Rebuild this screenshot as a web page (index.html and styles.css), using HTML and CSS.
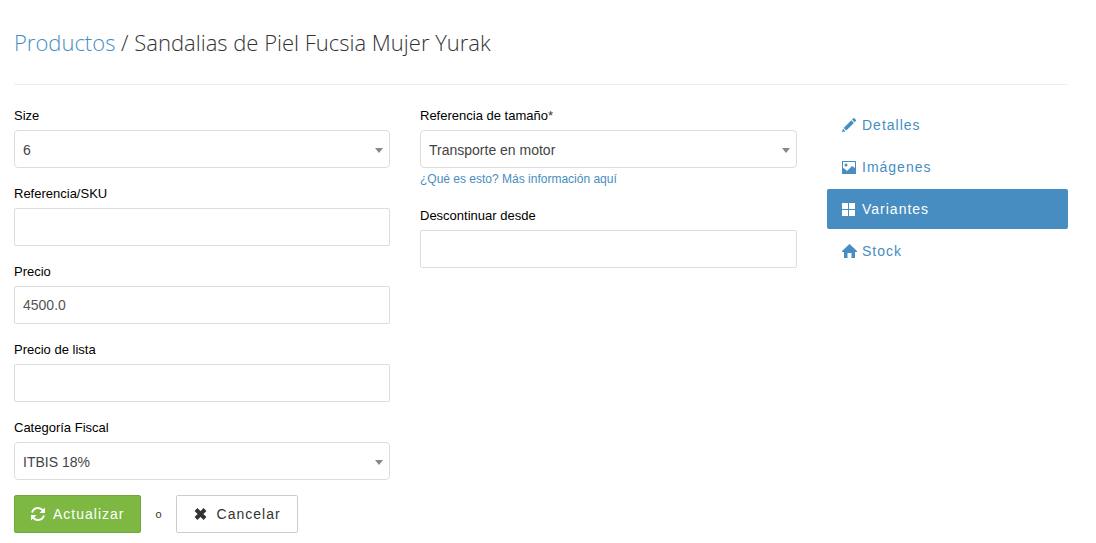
FILE: index.html
```
<!DOCTYPE html>
<html lang="es">
<head>
    <meta charset="UTF-8">
    <meta name="viewport" content="width=device-width, initial-scale=1.0">
    <title>Productos / Sandalias de Piel Fucsia Mujer Yurak</title>
    <link rel="stylesheet" href="styles.css">
</head>
<body>
    <header class="page-header">
        <h1><a href="#productos">Productos</a> / Sandalias de Piel Fucsia Mujer Yurak</h1>
    </header>

    <main class="content">
        <form id="variant-form" class="variant-form">
            <div class="column">
                <div class="field">
                    <label for="size">Size</label>
                    <div class="select">
                        <select id="size">
                            <option>6</option>
                        </select>
                    </div>
                </div>
                <div class="field">
                    <label for="sku">Referencia/SKU</label>
                    <input type="text" id="sku">
                </div>
                <div class="field">
                    <label for="price">Precio</label>
                    <input type="text" id="price" value="4500.0">
                </div>
                <div class="field">
                    <label for="list-price">Precio de lista</label>
                    <input type="text" id="list-price">
                </div>
                <div class="field">
                    <label for="tax">Categoría Fiscal</label>
                    <div class="select">
                        <select id="tax">
                            <option>ITBIS 18%</option>
                        </select>
                    </div>
                </div>
                <div class="actions">
                    <button type="submit" class="btn btn-success">
                        <svg class="icon" viewBox="0 0 16 16" fill="none" stroke="currentColor" stroke-width="2">
                            <path d="M1 6.500C2 3.500 4.500 2 7 2c2 0 3.500.8 4.800 2.200"/>
                            <path d="M13 9.500C12 12.500 9.500 14 7 14c-2 0-3.500-.8-4.800-2.200"/>
                            <path fill="currentColor" stroke="none" d="M14 1.500V7H8.500zM0 14.500V9h5.500z"/>
                        </svg>
                        Actualizar
                    </button>
                    <span class="or">o</span>
                    <button type="button" class="btn btn-default">
                        <svg class="icon" viewBox="0 0 16 16">
                            <path fill="none" stroke="currentColor" stroke-width="4" d="M3 3.500l9 9M12 3.500l-9 9"/>
                        </svg>
                        Cancelar
                    </button>
                </div>
            </div>

            <div class="column">
                <div class="field">
                    <label for="shipping">Referencia de tamaño<span class="required">*</span></label>
                    <div class="select">
                        <select id="shipping">
                            <option>Transporte en motor</option>
                        </select>
                    </div>
                    <a href="#ayuda" class="help">¿Qué es esto? Más información aquí</a>
                </div>
                <div class="field">
                    <label for="discontinue">Descontinuar desde</label>
                    <input type="text" id="discontinue">
                </div>
            </div>
        </form>

        <nav class="sidebar">
            <a href="#detalles">
                <svg class="icon" viewBox="0 0 16 16" fill="currentColor">
                    <path d="M12.200 1.400c.4-.4.9-.4 1.300 0l1.300 1.300c.4.4.4.9 0 1.300l-1.200 1.200-2.600-2.600zM10.300 3.300l2.600 2.600-7.600 7.600-2.600-2.600zM2 11.700L4.500 14.200 1 15.200z"/>
                </svg>
                Detalles
            </a>
            <a href="#imagenes">
                <svg class="icon" viewBox="0 0 16 16" fill="currentColor">
                    <path fill-rule="evenodd" d="M1 2h14v13H1zM2 3v6l2 1 2 2 5-5 3 2V3z"/>
                    <circle cx="5" cy="6" r="1.500"/>
                </svg>
                Imágenes
            </a>
            <a href="#variantes" class="active">
                <svg class="icon" viewBox="0 0 16 16" fill="currentColor">
                    <path d="M1 2h6v6H1zM8 2h6v6H8zM1 9h6v6H1zM8 9h6v6H8z"/>
                </svg>
                Variantes
            </a>
            <a href="#stock">
                <svg class="icon" viewBox="0 0 16 16" fill="currentColor">
                    <path d="M8.500 1L16 8v1h-2v6h-3.500v-5h-4v5H3V9H1V8z"/>
                </svg>
                Stock
            </a>
        </nav>
    </main>
</body>
</html>
```

FILE: styles.css
```
* {
    box-sizing: border-box;
}
body {
    margin: 0;
    padding: 0 28px 10px 14px;
    font-family: "Liberation Sans", Arial, sans-serif;
    font-size: 14px;
    line-height: 20px;
    color: #333;
    background-color: #fff;
}
a {
    color: #478dc1;
    text-decoration: none;
}
.page-header {
    padding: 26px 0;
    margin-bottom: 20px;
    border-bottom: 1px solid #eee;
}
h1 {
    margin: 0;
    font-family: "Open Sans", sans-serif;
    font-size: 22px;
    font-weight: 300;
    line-height: 32px;
}
.content {
    display: grid;
    grid-template-columns: 783fr 241fr;
    column-gap: 30px;
    align-items: start;
}
.variant-form {
    display: grid;
    grid-template-columns: 376fr 377fr;
    column-gap: 30px;
}
.field {
    margin-bottom: 15px;
}
label {
    display: block;
    margin-bottom: 3px;
    font-size: 13px;
    line-height: 22px;
    color: #000;
}
.required {
    color: #333;
}
input,
select {
    display: block;
    width: 100%;
    height: 38px;
    padding: 0 8px;
    font-family: inherit;
    font-size: 14px;
    color: #555;
    background-color: #fff;
    border: 1px solid #ddd;
    border-radius: 2px;
}
select {
    appearance: none;
    padding-top: 2px;
    color: #444;
    border-radius: 4px;
}
.select {
    position: relative;
}
.select::after {
    content: '';
    position: absolute;
    top: 18px;
    right: 7px;
    border: 4px solid transparent;
    border-top: 5px solid #888;
    border-bottom: 0;
    pointer-events: none;
}
.help {
    display: block;
    padding: 1px 0;
    font-size: 12px;
}
.actions {
    display: flex;
    align-items: center;
    gap: 14px;
}
.or {
    font-size: 11px;
}
.btn {
    display: flex;
    align-items: center;
    gap: 6px;
    height: 38px;
    padding: 0 16px;
    font-family: inherit;
    font-size: 14px;
    letter-spacing: 1px;
    border: 1px solid;
    border-radius: 2px;
}
.btn-success {
    color: #fff;
    background-color: #7db843;
    border-color: #71a83b;
}
.btn-default {
    gap: 8px;
    color: #333;
    background-color: #fff;
    border-color: #ccc;
}
.icon {
    flex: none;
    width: 16px;
    height: 16px;
}
.sidebar {
    display: flex;
    flex-direction: column;
    gap: 2px;
}
.sidebar a {
    display: flex;
    align-items: center;
    gap: 5px;
    padding: 10px 14px;
    letter-spacing: 1px;
    border-radius: 2px;
}
.sidebar .active {
    color: #fff;
    background-color: #478dc1;
}
```
